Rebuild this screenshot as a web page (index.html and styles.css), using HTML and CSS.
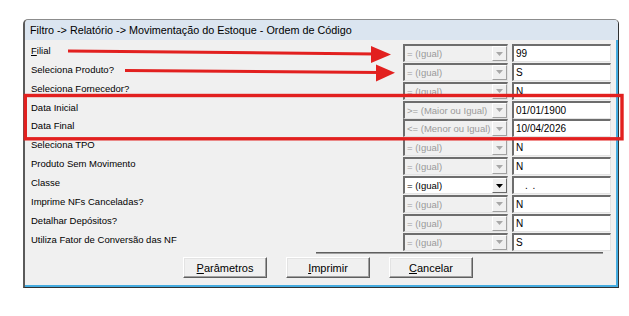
FILE: index.html
```html
<!DOCTYPE html>
<html lang="pt">
<head>
<meta charset="utf-8">
<title>Filtro</title>
<link rel="stylesheet" href="styles.css">
</head>
<body>
<div class="window">
  <div class="titlebar">Filtro -&gt; Relatório -&gt; Movimentação do Estoque - Ordem de Código</div>
  <div class="body">
    <div class="rows">
      <div class="row"><span class="label"><u>F</u>ilial</span><div class="select disabled"><span class="sel-text">= (Igual)</span><span class="drop"><svg width="7" height="4" viewBox="0 0 7 4"><path d="M0 0H7L3.5 4Z"/></svg></span></div><div class="input">99</div></div>
      <div class="row"><span class="label">Seleciona Produto?</span><div class="select disabled"><span class="sel-text">= (Igual)</span><span class="drop"><svg width="7" height="4" viewBox="0 0 7 4"><path d="M0 0H7L3.5 4Z"/></svg></span></div><div class="input">S</div></div>
      <div class="row"><span class="label">Seleciona Fornecedor?</span><div class="select disabled"><span class="sel-text">= (Igual)</span><span class="drop"><svg width="7" height="4" viewBox="0 0 7 4"><path d="M0 0H7L3.5 4Z"/></svg></span></div><div class="input">N</div></div>
      <div class="row"><span class="label">Data Inicial</span><div class="select disabled"><span class="sel-text">&gt;= (Maior ou Igual)</span><span class="drop"><svg width="7" height="4" viewBox="0 0 7 4"><path d="M0 0H7L3.5 4Z"/></svg></span></div><div class="input">01/01/1900</div></div>
      <div class="row"><span class="label">Data Final</span><div class="select disabled"><span class="sel-text">&lt;= (Menor ou Igual)</span><span class="drop"><svg width="7" height="4" viewBox="0 0 7 4"><path d="M0 0H7L3.5 4Z"/></svg></span></div><div class="input">10/04/2026</div></div>
      <div class="row"><span class="label">Seleciona TPO</span><div class="select disabled"><span class="sel-text">= (Igual)</span><span class="drop"><svg width="7" height="4" viewBox="0 0 7 4"><path d="M0 0H7L3.5 4Z"/></svg></span></div><div class="input">N</div></div>
      <div class="row"><span class="label">Produto Sem Movimento</span><div class="select disabled"><span class="sel-text">= (Igual)</span><span class="drop"><svg width="7" height="4" viewBox="0 0 7 4"><path d="M0 0H7L3.5 4Z"/></svg></span></div><div class="input">N</div></div>
      <div class="row"><span class="label">Classe</span><div class="select enabled"><span class="sel-text">= (Igual)</span><span class="drop"><svg width="7" height="4" viewBox="0 0 7 4"><path d="M0 0H7L3.5 4Z"/></svg></span></div><div class="input dots">. .</div></div>
      <div class="row"><span class="label">Imprime NFs Canceladas?</span><div class="select disabled"><span class="sel-text">= (Igual)</span><span class="drop"><svg width="7" height="4" viewBox="0 0 7 4"><path d="M0 0H7L3.5 4Z"/></svg></span></div><div class="input">N</div></div>
      <div class="row"><span class="label">Detalhar Depósitos?</span><div class="select disabled"><span class="sel-text">= (Igual)</span><span class="drop"><svg width="7" height="4" viewBox="0 0 7 4"><path d="M0 0H7L3.5 4Z"/></svg></span></div><div class="input">N</div></div>
      <div class="row"><span class="label">Utiliza Fator de Conversão das NF</span><div class="select disabled"><span class="sel-text">= (Igual)</span><span class="drop"><svg width="7" height="4" viewBox="0 0 7 4"><path d="M0 0H7L3.5 4Z"/></svg></span></div><div class="input">S</div></div>
    </div>
    <div class="separator"></div>
    <div class="buttons">
      <button class="btn"><u>P</u>arâmetros</button>
      <button class="btn"><u>I</u>mprimir</button>
      <button class="btn"><u>C</u>ancelar</button>
    </div>
  </div>
</div>
<svg class="annot" width="629" height="316" viewBox="0 0 629 316">
  <g fill="#e2201f" stroke="#e2201f">
    <path d="M68 51 L376 54" stroke-width="3" fill="none"/>
    <path d="M371 46 L391 54.5 L371 63 Z" stroke="none"/>
    <path d="M125 70.5 L380 72.5" stroke-width="3" fill="none"/>
    <path d="M376 64.5 L395 72.8 L376 81.5 Z" stroke="none"/>
  </g>
  <rect x="25.3" y="95.5" width="596.7" height="43.3" fill="none" stroke="#e2201f" stroke-width="3.4"/>
</svg>
</body>
</html>
```
FILE: styles.css
```css
* { box-sizing: border-box; }
html, body { margin: 0; padding: 0; background: #ffffff; }
body {
  width: 629px;
  height: 316px;
  position: relative;
  overflow: hidden;
  font-family: "Liberation Sans", Arial, sans-serif;
}
.window {
  margin: 19px 0 0 23px;
  width: 596px;
  height: 269px;
  border-top: 1px solid #8c8c8c;
  border-left: 2px solid #5a5a5a;
  border-right: 1px solid #303030;
  border-bottom: 1px solid #303030;
  border-radius: 5px 5px 0 0;
  display: flex;
  flex-direction: column;
  background: #f0f0f0;
}
.titlebar {
  height: 20px;
  background: #dbe5f0;
  border-radius: 4px 4px 0 0;
  font-size: 10.8px;
  line-height: 20px;
  padding-left: 5px;
  color: #000;
  white-space: nowrap;
}
.body {
  flex: 1;
  border-right: 2px solid #45ace0;
  border-bottom: 2px solid #45ace0;
  background: #f0f0f0;
  padding: 4px 5px 0 6px;
  display: flex;
  flex-direction: column;
}
.rows { display: flex; flex-direction: column; }
.row {
  height: 18.87px;
  display: grid;
  grid-template-columns: 1fr 105px 99px;
  column-gap: 4px;
  align-items: start;
}
.label {
  font-size: 9.5px;
  line-height: 12px;
  padding-top: 1px;
  color: #000;
  white-space: nowrap;
}
.select {
  height: 18px;
  display: flex;
  align-items: stretch;
  border-top: 2px solid #6d6d6d;
  border-left: 2px solid #6d6d6d;
  border-right: 1px solid #e3e3e3;
  border-bottom: 1px solid #e3e3e3;
}
.select.disabled { background: #f0f0f0; color: #9a9a9a; }
.select.enabled { background: #ffffff; color: #000; }
.sel-text {
  flex: 1;
  font-size: 9.5px;
  line-height: 15px;
  padding-left: 2px;
  white-space: nowrap;
  overflow: hidden;
}
.drop {
  width: 15px;
  display: flex;
  align-items: center;
  justify-content: center;
  border-left: 1px solid #ffffff;
  border-top: 1px solid #ffffff;
  border-right: 1px solid #a0a0a0;
  border-bottom: 1px solid #a0a0a0;
  background: #f0f0f0;
}
.select.disabled .drop svg { fill: #a8a8a8; }
.select.enabled .drop svg { fill: #000; }
.select.enabled .drop { border-right-color: #696969; border-bottom-color: #696969; }
.input {
  height: 18px;
  background: #ffffff;
  border-top: 2px solid #6d6d6d;
  border-left: 2px solid #6d6d6d;
  border-right: 1px solid #e3e3e3;
  border-bottom: 1px solid #e3e3e3;
  font-size: 10px;
  line-height: 15px;
  padding-left: 2px;
  color: #000;
}
.input.dots { padding-left: 11px; letter-spacing: 1px; }
.separator {
  height: 2px;
  margin-top: 1px;
  margin-left: 285px;
  margin-right: 8px;
  border-top: 1px solid #5f5f5f;
  border-bottom: 1px solid #a0a0a0;
}
.buttons {
  display: flex;
  gap: 19px;
  margin-top: 3px;
  padding-left: 152px;
}
.btn {
  width: 84px;
  height: 21px;
  padding: 0;
  font-family: "Liberation Sans", Arial, sans-serif;
  font-size: 11px;
  color: #000;
  background: #f0f0f0;
  border: 1px solid;
  border-color: #ffffff #5f5f5f #5f5f5f #ffffff;
  box-shadow: inset -1px -1px 0 #a0a0a0, inset 1px 1px 0 #e3e3e3;
  border-radius: 0;
}
.annot {
  position: absolute;
  left: 0;
  top: 0;
}
```
